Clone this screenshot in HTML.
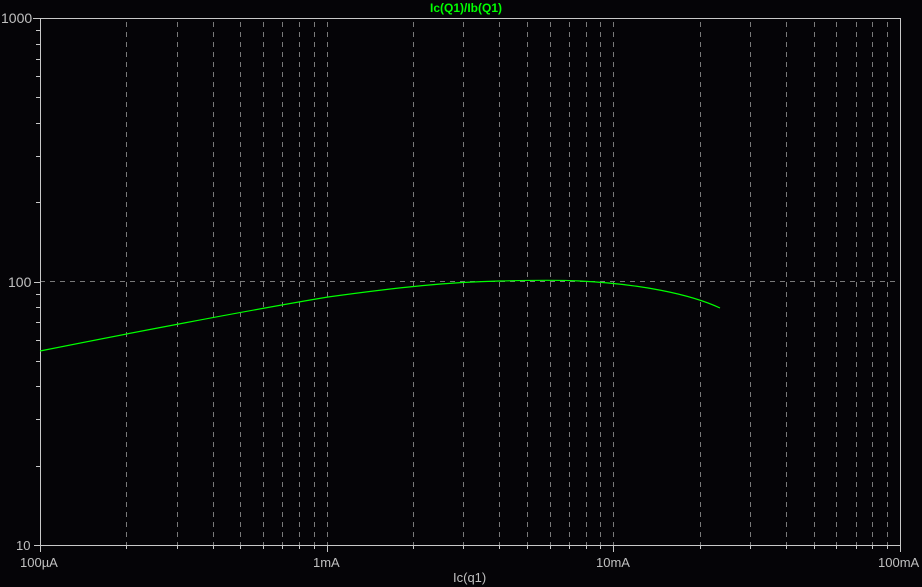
<!DOCTYPE html>
<html><head><style>
html,body{margin:0;padding:0;background:#050407;width:922px;height:587px;overflow:hidden}
svg{display:block}
text{font-family:"Liberation Sans",sans-serif;font-size:13px;fill:#c0c0c0}
</style></head><body>
<svg width="922" height="587" viewBox="0 0 922 587">
<g id="grid" stroke="#7a7a7a" stroke-width="1" stroke-dasharray="5,5" fill="none"></g>
<g id="ticks" stroke="#c8c8c8" stroke-width="1" fill="none"></g>
<line x1="33" y1="18.5" x2="901" y2="18.5" stroke="#c8c8c8"/>
<line x1="34" y1="545.5" x2="900" y2="545.5" stroke="#c8c8c8"/>
<line x1="40.5" y1="18" x2="40.5" y2="552" stroke="#c8c8c8"/>
<line x1="900.5" y1="18" x2="900.5" y2="552" stroke="#c8c8c8"/>
<path d="M40,351 C120,335 250,310 328,297 C400,287 450,282 500,281 C540,280 560,280 580,281 C640,284 690,294 720,308" stroke="#00ff00" stroke-width="1.2" fill="none"/>
<text x="1" y="23" style="font-size:14px">1000</text>
<text x="8" y="287" style="font-size:14px">100</text>
<text x="16" y="550">10</text>
<text x="20" y="567">100µA</text>
<text x="313" y="567">1mA</text>
<text x="596" y="567">10mA</text>
<text x="878" y="567">100mA</text>
<text x="453" y="582">Ic(q1)</text>
<text x="430" y="12" style="fill:#00ff00;font-weight:bold;font-size:12px">Ic(Q1)/Ib(Q1)</text>
</svg>
<script>
var g=document.getElementById('grid'),t=document.getElementById('ticks'),ns='http://www.w3.org/2000/svg';
function ln(p,x1,y1,x2,y2){var l=document.createElementNS(ns,'line');l.setAttribute('x1',x1);l.setAttribute('y1',y1);l.setAttribute('x2',x2);l.setAttribute('y2',y2);p.appendChild(l);}
var L=40,D=286.7;
for(var d=0;d<3;d++)for(var k=1;k<=9;k++){if(d==0&&k==1)continue;var x=Math.round(L+D*(d+Math.log10(k)))+0.5;ln(g,x,22,x,545);ln(t,x,545,x,k==1?552:549);}
ln(g,40,281.5,900,281.5);
for(var d=0;d<2;d++)for(var k=1;k<=10;k++){var y=Math.round(18+263.5*(2-d-Math.log10(k)+1)-263.5)+0.5;ln(t,(k==1||k==10)?34:36,y,40,y);}
</script>
</body></html>
